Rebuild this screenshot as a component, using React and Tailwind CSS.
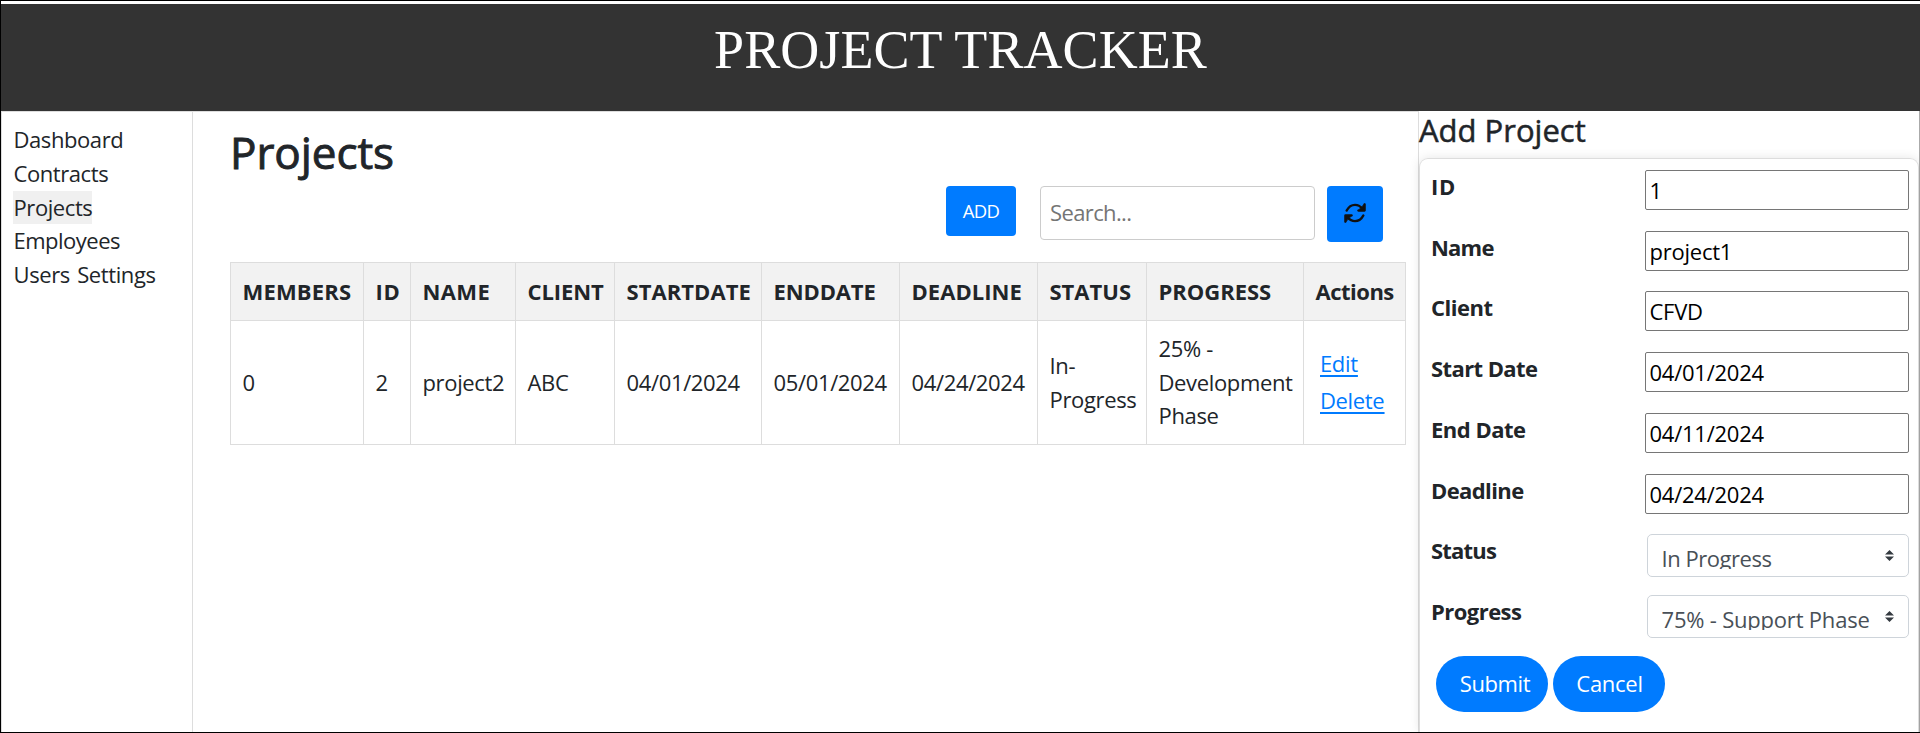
const navItems = [
  { label: "Dashboard", cls: "tracking-[-0.42px]" },
  { label: "Contracts", cls: "tracking-[-0.42px]" },
  { label: "Projects", cls: "tracking-[-0.42px]", active: true },
  { label: "Employees", cls: "tracking-[-0.5px]" },
  { label: "Users Settings", cls: "tracking-[-0.4px] [word-spacing:2px]" },
];

const columns = [
  { head: "MEMBERS", headCls: "tracking-[0.18px]", cell: "0", width: "w-[133px]" },
  { head: "ID", headCls: "tracking-[0.7px]", cell: "2", width: "w-[47px]" },
  { head: "NAME", headCls: "tracking-[0.4px]", cell: "project2", width: "w-[105px]" },
  { head: "CLIENT", headCls: "tracking-[-0.09px]", cell: "ABC", width: "w-[99px]" },
  { head: "STARTDATE", headCls: "tracking-[0.06px]", cell: "04/01/2024", width: "w-[147px]" },
  { head: "ENDDATE", headCls: "tracking-[-0.12px]", cell: "05/01/2024", width: "w-[138px]" },
  { head: "DEADLINE", headCls: "tracking-[0.05px]", cell: "04/24/2024", width: "w-[138px]" },
  { head: "STATUS", headCls: "tracking-[0px]", cell: "In-\nProgress", width: "w-[109px]" },
  { head: "PROGRESS", headCls: "tracking-[-0.03px]", cell: "25% -\nDevelopment\nPhase", width: "w-[157px]" },
  { head: "Actions", headCls: "tracking-[-0.5px]", width: "w-[102px]" },
];

const fields = [
  { label: "ID", value: "1", labelCls: "tracking-[0.7px]", h: "h-[61px]" },
  { label: "Name", value: "project1", labelCls: "tracking-[-0.8px]", h: "h-[60px]" },
  { label: "Client", value: "CFVD", labelCls: "tracking-[-0.48px]", h: "h-[61px]" },
  { label: "Start Date", value: "04/01/2024", labelCls: "tracking-[-0.59px]", h: "h-[61px]" },
  { label: "End Date", value: "04/11/2024", labelCls: "tracking-[-0.51px]", h: "h-[61px]" },
  { label: "Deadline", value: "04/24/2024", labelCls: "tracking-[-0.6px]", h: "h-[60px]" },
];

const selects = [
  { label: "Status", value: "In Progress", labelCls: "tracking-[-0.8px]", valueCls: "tracking-[-0.46px]" },
  { label: "Progress", value: "75% - Support Phase", labelCls: "tracking-[-0.54px]", valueCls: "tracking-[-0.2px]" },
];

function RefreshIcon() {
  return (
    <svg width="22" height="20" viewBox="0 0 22 20" fill="none" stroke="#111" strokeWidth="2.3" strokeLinecap="round" strokeLinejoin="round" className="mt-[-2px] block">
      <path d="M2.6 7.6C4.6 3.8 7.6 1.8 11 1.8c2.9 0 5.300 1.300 7.400 3.900" />
      <path d="M20.600 1v6.500h-6.300z" fill="#111" strokeWidth="0.6" />
      <path d="M20.600 1.300v6.300h-6.200" />
      <path d="M19.400 12.400c-2 3.800-5 5.800-8.400 5.800c-2.900 0-5.300-1.300-7.400-3.900" />
      <path d="M1.400 19v-6.500h6.300z" fill="#111" strokeWidth="0.6" />
      <path d="M1.400 18.700v-6.300h6.200" />
    </svg>
  );
}

function Caret() {
  return (
    <svg width="9" height="11" viewBox="0 0 4 5" preserveAspectRatio="none" fill="#343a40" className="mt-[15px] block shrink-0">
      <path d="M2 0L0 2h4zm0 5L0 3h4z" />
    </svg>
  );
}

export default function App() {
  return (
    <div className="flex h-[733px] w-[1920px] flex-col overflow-hidden border-y border-l border-black bg-white pt-[3px] font-['Open_Sans','Noto_Sans',sans-serif] text-[22px] leading-[33.6px] text-[#212529]">
      <header className="h-[107px] shrink-0 bg-[#333] pt-[14px] text-center">
        <h1 className="font-['Liberation_Serif',serif] text-[54px] leading-[64px] tracking-[0.08px] text-white">PROJECT TRACKER</h1>
      </header>
      <div className="flex min-h-0 flex-1">
        <aside className="w-[192px] shrink-0 border border-b-0 border-[#ddd] pt-[11px] pl-[11.5px]">
          <ul className="leading-[33.8px]">
            {navItems.map((item) => (
              <li key={item.label} className={item.cls}>
                <a className={item.active ? "-ml-px inline-block h-[33px] bg-[#f0f0f0] pl-px align-top" : ""}>{item.label}</a>
              </li>
            ))}
          </ul>
        </aside>

        <main className="w-[1225px] shrink-0 border-t border-[#ddd] pl-[37px]">
          <h2 className="h-[74px] pt-[14px] text-[44px] leading-[53px] tracking-[-0.07px] [-webkit-text-stroke:0.9px_#212529]">Projects</h2>
          <div className="flex h-[76px] items-start pl-[716px]">
            <button className="h-[50px] w-[70px] rounded-[4px] bg-[#007bff] pb-[1px] text-[18.5px] leading-[49px] tracking-[-0.7px] text-white">ADD</button>
            <input
              placeholder="Search..."
              className="ml-[24px] h-[54px] w-[275px] rounded-[4px] border border-[#ccc] pb-[2px] pl-[9px] tracking-[-0.62px] placeholder:text-[#757575]"
            />
            <button className="ml-[12px] flex h-[56px] w-[56px] items-center justify-center rounded-[4px] bg-[#007bff]">
              <RefreshIcon />
            </button>
          </div>
          <table className="w-[1176px] table-fixed border-collapse">
            <thead>
              <tr className="h-[58px] bg-[#f2f2f2]">
                {columns.map((col) => (
                  <th key={col.head} className={`border border-[#ddd] pl-[11.5px] text-left font-bold whitespace-nowrap ${col.width} ${col.headCls}`}>
                    {col.head}
                  </th>
                ))}
              </tr>
            </thead>
            <tbody>
              <tr className="h-[124px]">
                {columns.map((col) => (
                  <td key={col.head} className="border border-[#ddd] pl-[11.5px] tracking-[-0.35px] whitespace-pre">
                    {col.cell ?? (
                      <div className="flex flex-col items-start pb-[2px] pl-[4.5px] leading-[37px] text-[#007bff] underline decoration-2 underline-offset-[3px]">
                        <a>Edit</a>
                        <a>Delete</a>
                      </div>
                    )}
                  </td>
                ))}
              </tr>
            </tbody>
          </table>
        </main>

        <section className="flex min-w-0 flex-1 flex-col border-r border-l border-r-[#aaa] border-l-[#ddd]">
          <h3 className="h-[47px] pt-px text-[31px] leading-[37px] [-webkit-text-stroke:0.5px_#212529]">Add Project</h3>
          <div className="flex-1 rounded-t-[9px] border border-b-0 border-[#ddd] pt-[11px] pr-[9px] pl-[11px] shadow-[0_0_11px_rgba(0,0,0,0.1)]">
            {fields.map((f) => (
              <div key={f.label} className={`flex items-start justify-between ${f.h}`}>
                <label className={`font-bold ${f.labelCls}`}>{f.label}</label>
                <input
                  defaultValue={f.value}
                  className="h-[40px] w-[264px] rounded-[2px] border border-[#767676] pb-px pl-[3.5px] tracking-[-0.24px] text-black"
                />
              </div>
            ))}
            {selects.map((s) => (
              <div key={s.label} className="flex h-[61px] items-start justify-between">
                <label className={`font-bold ${s.labelCls}`}>{s.label}</label>
                <div className="flex h-[43px] w-[262px] justify-between rounded-[5px] border border-[#ced4da] pr-[14px] pl-[13.5px] text-[#495057]">
                  <div className={`h-[34px] overflow-hidden pt-[7px] whitespace-nowrap ${s.valueCls}`}>{s.value}</div>
                  <Caret />
                </div>
              </div>
            ))}
            <div className="flex gap-[5px] pl-[5px] text-white">
              <button className="h-[56px] w-[112px] rounded-full bg-[#007bff] pl-[6px] tracking-[-0.39px]">Submit</button>
              <button className="h-[56px] w-[112px] rounded-full bg-[#007bff] pl-[1px] tracking-[-0.29px]">Cancel</button>
            </div>
          </div>
        </section>
      </div>
    </div>
  );
}
